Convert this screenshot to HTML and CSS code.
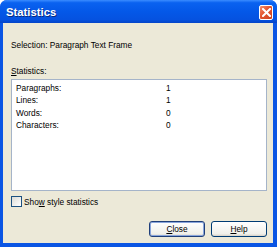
FILE: index.html
```html
<!DOCTYPE html>
<html lang="en">
<head>
    <meta charset="UTF-8">
    <title>Statistics</title>
    <link rel="stylesheet" href="styles.css">
</head>
<body>
    <div class="window">
        <div class="titlebar">
            <span class="title">Statistics</span>
            <span class="close-btn">
                <svg width="9" height="9" viewBox="0 0 9 9">
                    <path d="M1 1 L8 8 M8 1 L1 8" stroke="#fff" stroke-width="2" stroke-linecap="square"/>
                </svg>
            </span>
        </div>
        <div class="content">
            <div class="selection">Selection: Paragraph Text Frame</div>
            <div class="stats-label"><u>S</u>tatistics:</div>
            <div class="listbox">
                <div class="row"><span class="name">Paragraphs:</span><span class="value">1</span></div>
                <div class="row"><span class="name">Lines:</span><span class="value">1</span></div>
                <div class="row"><span class="name">Words:</span><span class="value">0</span></div>
                <div class="row"><span class="name">Characters:</span><span class="value">0</span></div>
            </div>
            <label class="check">
                <span class="box"></span>
                <span>Sho<u>w</u> style statistics</span>
            </label>
            <div class="buttons">
                <button class="btn default"><u>C</u>lose</button>
                <button class="btn"><u>H</u>elp</button>
            </div>
        </div>
    </div>
</body>
</html>
```

FILE: styles.css
```css
body {
    margin: 0;
    padding: 0;
    font-family: "Liberation Sans", Arial, sans-serif;
    font-size: 8.3px;
    color: #000;
    background-color: #fff;
}
.window {
    width: 277px;
    height: 247px;
    box-sizing: border-box;
    display: flex;
    flex-direction: column;
    background-color: #0A55E4;
    border-radius: 7px 7px 0 0;
    padding: 0 4px 4px 3px;
}
.titlebar {
    height: 23px;
    margin: 0 -4px 0 -3px;
    padding: 0 4px 0 6px;
    display: flex;
    align-items: center;
    justify-content: space-between;
    border-radius: 7px 7px 0 0;
    background: linear-gradient(to bottom, #3A8CFF 0%, #0A62F0 12%, #0458E8 50%, #0552E0 85%, #0545C8 100%);
}
.title {
    color: white;
    font-weight: bold;
    font-size: 11.3px;
    text-shadow: 1px 1px 0 #0A2A80;
    margin-top: 1px;
}
.close-btn {
    width: 14px;
    height: 15px;
    box-sizing: border-box;
    border: 1px solid #fff;
    border-radius: 2px;
    background: linear-gradient(to bottom right, #F39070, #E2542E 45%, #CC4220);
    display: flex;
    align-items: center;
    justify-content: center;
    margin-top: 2px;
}
.content {
    flex: 1;
    background-color: #ECE9D8;
    padding: 17px 6px 0 8px;
    display: flex;
    flex-direction: column;
}
.selection {
    height: 10px;
    line-height: 10px;
}
.stats-label {
    margin-top: 16px;
    height: 10px;
    line-height: 10px;
}
.listbox {
    margin-top: 3px;
    height: 112px;
    box-sizing: border-box;
    background-color: white;
    border: 1px solid #A5B4C9;
    padding: 2px 0 0 4px;
}
.row {
    display: flex;
    height: 12.3px;
    line-height: 12.3px;
}
.name {
    width: 150px;
}
.check {
    margin-top: 5px;
    display: flex;
    align-items: center;
    gap: 2px;
    height: 11px;
}
.box {
    width: 11px;
    height: 11px;
    box-sizing: border-box;
    border: 1px solid #1C5180;
    background: linear-gradient(to bottom right, #DCDCD6, #FFFFFF);
}
.buttons {
    margin-top: 14px;
    display: flex;
    justify-content: flex-end;
    gap: 6px;
}
.btn {
    width: 56px;
    height: 16px;
    padding: 0;
    font-family: inherit;
    font-size: 8.3px;
    color: #000;
    border: 1px solid #003C74;
    border-radius: 3px;
    background: linear-gradient(to bottom, #FFFFFF, #F0F0EA 85%, #D6D0C5);
    display: flex;
    align-items: center;
    justify-content: center;
}
.btn.default {
    border-color: #1F3F7A;
    box-shadow: inset 0 0 0 1px #8AA6DC;
}
```
